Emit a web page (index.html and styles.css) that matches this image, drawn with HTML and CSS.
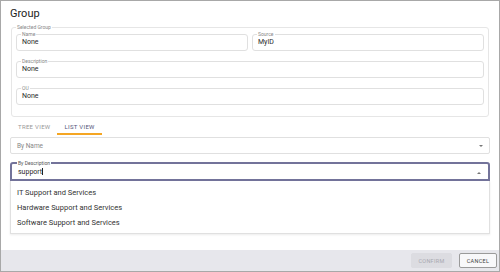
FILE: index.html
```html
<!DOCTYPE html>
<html lang="en">
<head>
  <meta charset="UTF-8" />
  <meta name="viewport" content="width=device-width, initial-scale=1.0"/>
  <title>Group</title>
  <link rel="stylesheet" href="styles.css">
</head>
<body>

<div class="dialog">
  <div class="content">
    <h1 class="title">Group</h1>

    <fieldset class="group">
      <legend>Selected Group</legend>
      <div class="row">
        <fieldset class="field">
          <legend>Name</legend>
          <div class="value">None</div>
        </fieldset>
        <fieldset class="field">
          <legend>Source</legend>
          <div class="value">MyID</div>
        </fieldset>
      </div>
      <fieldset class="field">
        <legend>Description</legend>
        <div class="value">None</div>
      </fieldset>
      <fieldset class="field">
        <legend>OU</legend>
        <div class="value">None</div>
      </fieldset>
    </fieldset>

    <div class="tabs">
      <div class="tab">Tree View</div>
      <div class="tab active">List View</div>
    </div>

    <div class="select">
      <span class="placeholder">By Name</span>
      <span class="arrow down"></span>
    </div>

    <fieldset class="field focused">
      <legend>By Description</legend>
      <div class="value">
        <span>support<span class="caret"></span></span>
        <span class="arrow up"></span>
      </div>
    </fieldset>

    <ul class="options">
      <li>IT Support and Services</li>
      <li>Hardware Support and Services</li>
      <li>Software Support and Services</li>
    </ul>
  </div>

  <div class="footer">
    <button class="btn confirm" disabled>Confirm</button>
    <button class="btn cancel">Cancel</button>
  </div>
</div>

</body>
</html>
```

FILE: styles.css
```css
* {
  box-sizing: border-box;
}

body {
  margin: 0;
  font-family: Roboto, 'Liberation Sans', sans-serif;
  color: #333;
  background: white;
}

.dialog {
  width: 500px;
  height: 272px;
  border: 1px solid #a8a8a8;
  display: flex;
  flex-direction: column;
  background: white;
}

.content {
  flex: 1;
  padding: 0 9px;
}

.title {
  margin: 0;
  padding-top: 3px;
  font-size: 11px;
  line-height: 20px;
  font-weight: normal;
  color: #222;
}

fieldset {
  margin: 0;
  min-width: 0;
}

legend {
  font-size: 5px;
  line-height: 6px;
  padding: 0 1px;
  color: #888;
}

.group {
  margin: 0 1px;
  padding: 1px 4px 11px 4px;
  border: 1px solid #e6e6e6;
  border-radius: 3px;
}

.row {
  display: flex;
  gap: 4px;
}

.row .field {
  flex: 1;
}

.field {
  padding: 0 4px;
  border: 1px solid #e0e0e0;
  border-radius: 3px;
  margin-top: 7px;
}

.row .field,
.group > .row {
  margin-top: 0;
}

.field .value {
  height: 13px;
  line-height: 11px;
  font-size: 7px;
  padding-left: 1px;
  color: #2a2a2a;
}

.tabs {
  display: flex;
  margin-top: 4px;
  padding-left: 1px;
}

.tab {
  padding: 0 7px;
  height: 14px;
  line-height: 12px;
  font-size: 6px;
  letter-spacing: 0.3px;
  text-transform: uppercase;
  color: #999;
  border-bottom: 2px solid transparent;
}

.tab.active {
  color: #55557a;
  border-bottom-color: #f5a623;
}

.select {
  margin-top: 2px;
  height: 17px;
  border: 1px solid #e0e0e0;
  border-radius: 2px;
  display: flex;
  align-items: center;
  justify-content: space-between;
  padding: 0 6px 0 6px;
  font-size: 6.5px;
  color: #888;
}

.arrow {
  width: 0;
  height: 0;
  border-left: 2px solid transparent;
  border-right: 2px solid transparent;
}

.arrow.down {
  border-top: 2px solid #777;
}

.arrow.up {
  border-bottom: 2px solid #777;
}

.field.focused {
  margin-top: 6px;
  border: 2px solid #73739a;
  border-bottom-left-radius: 0;
  border-bottom-right-radius: 0;
  padding: 0 4px 0 5px;
}

.field.focused legend {
  color: #555;
}

.field.focused .value {
  height: 13px;
  line-height: 13px;
  display: flex;
  align-items: center;
  justify-content: space-between;
  padding-right: 3px;
}

.caret {
  display: inline-block;
  width: 1px;
  height: 7px;
  background: #222;
  vertical-align: -1px;
}

.options {
  list-style: none;
  margin: 0;
  padding: 4px 0 3px 0;
  border: 1px solid #e0e0e0;
  border-top: none;
  box-shadow: 0 1px 2px rgba(0, 0, 0, 0.08);
}

.options li {
  height: 15px;
  line-height: 15px;
  padding-left: 6px;
  font-size: 7.5px;
  color: #333;
}

.footer {
  height: 21px;
  background: #e7e7ec;
  display: flex;
  justify-content: flex-end;
  align-items: center;
  gap: 7px;
  padding-right: 2px;
}

.btn {
  height: 15px;
  font-family: Roboto, 'Liberation Sans', sans-serif;
  font-size: 5.5px;
  letter-spacing: 0.3px;
  text-transform: uppercase;
  border-radius: 2px;
  padding: 0;
}

.confirm {
  width: 41px;
  background: #dcdce1;
  border: 1px solid #dcdce1;
  color: #a8a8b0;
}

.cancel {
  width: 38px;
  background: #f8f8fa;
  border: 1px solid #9a9a9a;
  color: #444;
}
```
